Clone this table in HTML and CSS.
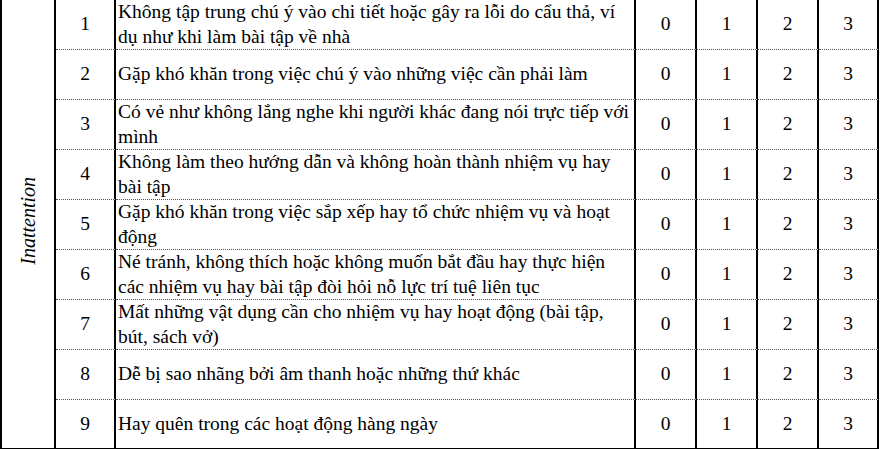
FILE: index.html
```html
<!DOCTYPE html>
<html lang="vi">
<head>
<meta charset="utf-8">
<title>Inattention</title>
<link rel="stylesheet" href="styles.css">
</head>
<body>
<table class="scale">
  <colgroup>
    <col class="c-cat"><col class="c-num"><col class="c-text"><col class="c-val"><col class="c-val"><col class="c-val"><col class="c-last">
  </colgroup>
  <tbody>
    <tr class="r50">
      <td class="cat" rowspan="9"><span class="cat-label">Inattention</span></td>
      <td class="num">1</td>
      <td class="text">Không tập trung chú ý vào chi tiết hoặc gây ra lỗi do cẩu thả, ví dụ như khi làm bài tập về nhà</td>
      <td class="val">0</td><td class="val">1</td><td class="val">2</td><td class="val">3</td>
    </tr>
    <tr class="r50">
      <td class="num">2</td>
      <td class="text">Gặp khó khăn trong việc chú ý vào những việc cần phải làm</td>
      <td class="val">0</td><td class="val">1</td><td class="val">2</td><td class="val">3</td>
    </tr>
    <tr class="r49">
      <td class="num">3</td>
      <td class="text">Có vẻ như không lắng nghe khi người khác đang nói trực tiếp với mình</td>
      <td class="val">0</td><td class="val">1</td><td class="val">2</td><td class="val">3</td>
    </tr>
    <tr class="r50">
      <td class="num">4</td>
      <td class="text">Không làm theo hướng dẫn và không hoàn thành nhiệm vụ hay bài tập</td>
      <td class="val">0</td><td class="val">1</td><td class="val">2</td><td class="val">3</td>
    </tr>
    <tr class="r50">
      <td class="num">5</td>
      <td class="text">Gặp khó khăn trong việc sắp xếp hay tổ chức nhiệm vụ và hoạt động</td>
      <td class="val">0</td><td class="val">1</td><td class="val">2</td><td class="val">3</td>
    </tr>
    <tr class="r49">
      <td class="num">6</td>
      <td class="text">Né tránh, không thích hoặc không muốn bắt đầu hay thực hiện các nhiệm vụ hay bài tập đòi hỏi nỗ lực trí tuệ liên tục</td>
      <td class="val">0</td><td class="val">1</td><td class="val">2</td><td class="val">3</td>
    </tr>
    <tr class="r50">
      <td class="num">7</td>
      <td class="text">Mất những vật dụng cần cho nhiệm vụ hay hoạt động (bài tập, bút, sách vở)</td>
      <td class="val">0</td><td class="val">1</td><td class="val">2</td><td class="val">3</td>
    </tr>
    <tr class="r50">
      <td class="num">8</td>
      <td class="text">Dễ bị sao nhãng bởi âm thanh hoặc những thứ khác</td>
      <td class="val">0</td><td class="val">1</td><td class="val">2</td><td class="val">3</td>
    </tr>
    <tr class="r48 last">
      <td class="num">9</td>
      <td class="text">Hay quên trong các hoạt động hàng ngày</td>
      <td class="val">0</td><td class="val">1</td><td class="val">2</td><td class="val">3</td>
    </tr>
  </tbody>
</table>
</body>
</html>
```

FILE: styles.css
```css
html, body {
  margin: 0;
  padding: 0;
  background: #fff;
}

body {
  font-family: "Liberation Serif", "Times New Roman", serif;
  font-size: 19.5px;
  color: #000;
}

.scale {
  font-family: "Liberation Serif", "Times New Roman", serif;
  border-collapse: separate;
  border-spacing: 0;
  table-layout: fixed;
  width: 879px;
  border-left: 2px solid #000;
  border-bottom: 2px solid #000;
}

.c-cat { width: 54px; }
.c-num { width: 60px; }
.c-text { width: 520px; }
.c-val { width: 61px; }
.c-last { width: 60px; }

.scale td {
  box-sizing: border-box;
  padding: 0;
  border-right: 2px solid #000;
  border-bottom: 1px dotted #555;
  vertical-align: middle;
  line-height: 24.5px;
}

.scale tr.last td { border-bottom: none; }
.scale td.cat { border-bottom: none; text-align: center; }

.r50 { height: 50px; }
.r49 { height: 49px; }
.r48 { height: 48px; }

.num, .val { text-align: center; }

.text {
  padding: 0 4px 0 2px !important;
  text-align: left;
}

.cat-label {
  display: inline-block;
  writing-mode: vertical-rl;
  transform: rotate(180deg);
  font-style: italic;
  font-size: 20px;
  line-height: 20px;
}
```
